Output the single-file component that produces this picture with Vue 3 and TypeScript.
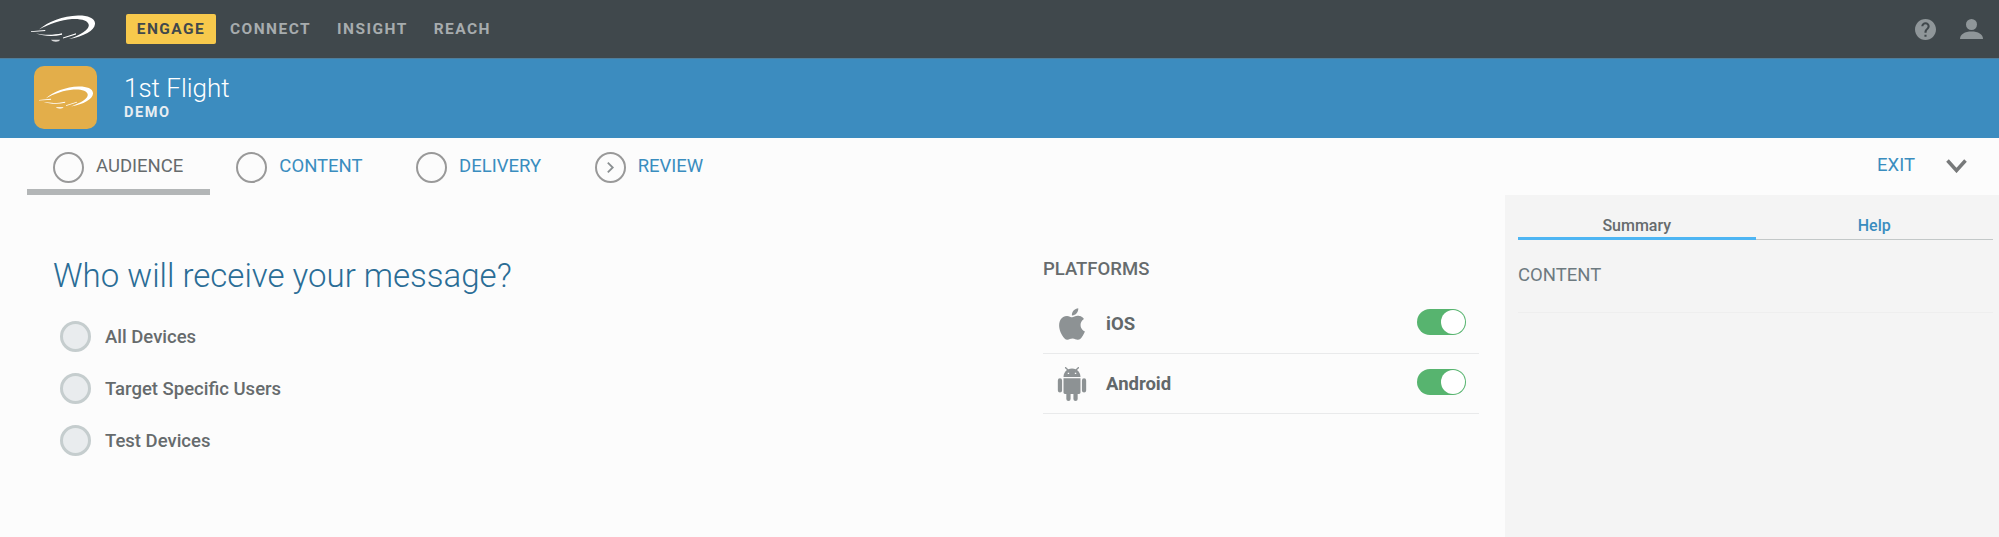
<script setup lang="ts">
interface Step { label: string; active?: boolean; arrow?: boolean }
const navItems: string[] = ['CONNECT', 'INSIGHT', 'REACH']
const steps: Step[] = [
  { label: 'AUDIENCE', active: true },
  { label: 'CONTENT' },
  { label: 'DELIVERY' },
  { label: 'REVIEW', arrow: true },
]
const audiences: string[] = ['All Devices', 'Target Specific Users', 'Test Devices']
const apple = 'M18.71,19.5C17.88,20.74 17,21.95 15.66,21.97C14.32,22 13.89,21.18 12.37,21.18C10.84,21.18 10.37,21.95 9.1,22C7.79,22.05 6.8,20.68 5.96,19.47C4.25,17 2.94,12.45 4.7,9.39C5.57,7.87 7.13,6.91 8.82,6.88C10.1,6.86 11.32,7.75 12.11,7.75C12.89,7.75 14.37,6.68 15.92,6.84C16.57,6.87 18.39,7.1 19.56,8.82C19.47,8.88 17.39,10.1 17.41,12.63C17.44,15.65 20.06,16.66 20.09,16.67C20.06,16.74 19.67,18.11 18.71,19.5M13,3.5C13.73,2.67 14.94,2.04 15.94,2C16.07,3.17 15.6,4.35 14.9,5.19C14.21,6.04 13.07,6.7 11.95,6.61C11.8,5.46 12.36,4.26 13,3.5Z'
const android = 'M15,5H14V4H15M10,5H9V4H10M15.53,2.16L16.84,0.85C17.03,0.66 17.03,0.34 16.84,0.14C16.64,-0.05 16.32,-0.05 16.13,0.14L14.65,1.62C13.85,1.23 12.95,1 12,1C11.04,1 10.14,1.23 9.34,1.63L7.85,0.14C7.66,-0.05 7.34,-0.05 7.15,0.14C6.95,0.34 6.95,0.66 7.15,0.85L8.46,2.16C6.97,3.26 6,5 6,7H18C18,5 17,3.25 15.53,2.16M20.5,8A1.5,1.5 0 0,0 19,9.5V16.5A1.5,1.5 0 0,0 20.5,18A1.5,1.5 0 0,0 22,16.5V9.5A1.5,1.5 0 0,0 20.5,8M3.5,8A1.5,1.5 0 0,0 2,9.5V16.5A1.5,1.5 0 0,0 3.5,18A1.5,1.5 0 0,0 5,16.5V9.5A1.5,1.5 0 0,0 3.5,8M6,18A1,1 0 0,0 7,19H8V22.5A1.5,1.5 0 0,0 9.5,24A1.5,1.5 0 0,0 11,22.5V19H13V22.5A1.5,1.5 0 0,0 14.5,24A1.5,1.5 0 0,0 16,22.5V19H17A1,1 0 0,0 18,18V8H6V18Z'
const platforms = [
  { name: 'iOS', path: apple, size: 38 },
  { name: 'Android', path: android, size: 34 },
]
const blimp = 'M8 14.500C17 6.500 32 .8 47 .4 57 .2 64.500 3.200 64 9 63.500 15.500 53 21.500 38 24 50 19.500 58 15 57.800 10 57.500 5.500 50 3.500 41 4 30 4.800 18 9 8 14.500Z'
const streaks = 'M0 16.300 14 15 14.500 16 0 17.100ZM5 18.500C15 20.500 23 20 31 18.300L31 19.700C22 21.700 13 21.300 5 18.500ZM32 22.500 45 18.300 45 19.400 32 23.500Z'
const gondola = 'M20 24.700 29 24.700C28.500 27.300 21.500 27.300 20 24.700Z'
</script>

<template>
  <div class="page">
    <header class="topbar">
      <svg class="logo" viewBox="0 0 64 28" fill="#fff">
        <path :d="blimp" />
        <path :d="streaks" />
        <path :d="gondola" opacity=".8" />
      </svg>
      <nav class="mainnav">
        <span class="engage">ENGAGE</span>
        <span v-for="item in navItems" :key="item" class="navitem">{{ item }}</span>
      </nav>
      <div class="usericons">
        <svg class="help" viewBox="2 2 20 20" fill="#8f9699"><path d="M12 2C6.480 2 2 6.480 2 12s4.480 10 10 10 10-4.480 10-10S17.520 2 12 2zm1 17h-2v-2h2v2zm2.070-7.750l-.9.920C13.450 12.900 13 13.500 13 15h-2v-.5c0-1.100.450-2.100 1.170-2.830l1.240-1.260c.370-.360.590-.860.590-1.410 0-1.100-.9-2-2-2s-2 .9-2 2H8c0-2.210 1.790-4 4-4s4 1.790 4 4c0 .880-.360 1.680-.930 2.250z" /></svg>
        <svg class="person" viewBox="0 0 23 20" fill="#8f9699"><circle cx="11.500" cy="5.500" r="5.500" /><path d="M0 20C0 15 5 12.500 11.500 12.500S23 15 23 20Z" /></svg>
      </div>
    </header>

    <section class="appbar">
      <div class="appicon">
        <svg class="applogo" viewBox="0 0 64 28" fill="#fff">
          <path :d="blimp" />
          <path :d="streaks" />
          <path :d="gondola" opacity=".8" />
        </svg>
      </div>
      <div class="apptext">
        <div class="appname">1st Flight</div>
        <div class="appmode">DEMO</div>
      </div>
    </section>

    <section class="stepbar">
      <div v-for="step in steps" :key="step.label" class="step" :class="{ active: step.active }">
        <span class="stepcircle">
          <svg v-if="step.arrow" viewBox="0 0 10 14" class="steparrow"><path d="M2 1.500 7.500 7 2 12.500" /></svg>
        </span>
        <span class="steplabel">{{ step.label }}</span>
      </div>
      <span class="exit">EXIT</span>
      <svg class="chevron" viewBox="0 0 21 14"><path d="M1.500 1.500 10.500 11.500 19.500 1.500" /></svg>
    </section>

    <main class="content">
      <div class="form">
        <div class="audience">
          <h1>Who will receive your message?</h1>
          <label v-for="a in audiences" :key="a" class="radio"><span class="dot"></span>{{ a }}</label>
        </div>
        <div class="platforms">
          <h2>PLATFORMS</h2>
          <div v-for="p in platforms" :key="p.name" class="platform">
            <span class="picon"><svg :width="p.size" :height="p.size" viewBox="0 0 24 24" fill="#8d9294"><path :d="p.path" /></svg></span>
            <span class="pname">{{ p.name }}</span>
            <span class="toggle"><span class="knob"></span></span>
          </div>
        </div>
      </div>
      <aside class="side">
        <div class="tabs">
          <div class="tab current">Summary</div>
          <div class="tab">Help</div>
        </div>
        <div class="sidehead">CONTENT</div>
      </aside>
    </main>
  </div>
</template>

<style>
html, body { margin: 0; background: #fcfcfc; }
</style>

<style scoped>
.page { width: 1999px; height: 537px; overflow: hidden; display: flex; flex-direction: column; background: #fcfcfc; font-family: Roboto, "Liberation Sans", sans-serif; }

.topbar { height: 58px; flex: none; display: flex; align-items: center; background: #40484c; padding-left: 31px; padding-right: 16px; box-sizing: border-box; }
.logo { width: 64px; height: 28px; flex: none; margin-top: -1px; }
.mainnav { display: flex; align-items: center; margin-left: 31px; font-size: 15.500px; font-weight: 700; letter-spacing: 1.450px; }
.engage { background: #f7c94c; color: #40484c; border-radius: 2px; height: 30px; line-height: 30px; width: 90px; text-align: center; margin-right: 14px; }
.navitem { color: #a7acae; margin-right: 26px; }
.usericons { margin-left: auto; display: flex; align-items: center; gap: 24px; }
.help { width: 21px; height: 21px; }
.person { width: 23px; height: 20px; }

.appbar { height: 80px; flex: none; display: flex; align-items: center; background: #3c8cbf; border-top: 1px solid #4f7e9c; box-sizing: border-box; padding-left: 34px; padding-bottom: 2px; }
.appicon { width: 63px; height: 63px; background: #e3ae4a; border-radius: 10px; display: flex; align-items: center; justify-content: center; }
.applogo { width: 54px; height: 24px; }
.apptext { margin-left: 27px; color: #fff; }
.appname { font-size: 26px; font-weight: 300; line-height: 30px; }
.appmode { font-size: 14.500px; font-weight: 700; letter-spacing: 1.600px; line-height: 19px; color: #e8eef2; }

.stepbar { height: 57px; flex: none; display: flex; align-items: flex-start; padding-left: 27px; padding-right: 32px; box-sizing: border-box; }
.step { display: flex; align-items: center; gap: 12px; height: 51px; padding: 7px 27.500px 0 26px; box-sizing: border-box; color: #3a8dbf; font-size: 18.500px; }
.step.active { color: #666b6d; height: 57px; border-bottom: 6px solid #b3b6b7; padding-right: 27px; }
.stepcircle { width: 31px; height: 31px; box-sizing: border-box; border: 2px solid #999; border-radius: 50%; display: flex; align-items: center; justify-content: center; flex: none; }
.steparrow { width: 9px; height: 13px; fill: none; stroke: #8a8f91; stroke-width: 2; }
.steplabel { line-height: 20px; margin-top: -2px; }
.exit { margin-left: auto; margin-top: 17px; color: #3a8dbf; font-size: 18.500px; line-height: 20px; }
.chevron { width: 21px; height: 14px; margin-left: 31px; margin-top: 21px; fill: none; stroke: #77797a; stroke-width: 3.500; }

.content { flex: 1; display: flex; min-height: 0; }
.form { flex: 1; display: flex; }
.audience { width: 1043px; padding-left: 53px; box-sizing: border-box; }
h1 { margin: 61px 0 25px; font-size: 33px; font-weight: 300; line-height: 40px; color: #2a6d96; }
.radio { display: flex; align-items: center; gap: 14px; height: 31px; margin: 0 0 21px 7px; font-size: 18.500px; font-weight: 500; color: #666b6d; }
.dot { width: 31px; height: 31px; box-sizing: border-box; border: 3px solid #c5cdce; background: #e9ecee; border-radius: 50%; flex: none; }
.platforms { width: 436px; }
h2 { margin: 64px 0 15px; font-size: 18.500px; font-weight: 500; line-height: 20px; color: #666b6d; }
.platform { height: 60px; display: flex; align-items: center; border-bottom: 1px solid #e9eaeb; box-sizing: border-box; padding-right: 13px; }
.picon { width: 63px; display: flex; justify-content: center; padding-right: 6px; box-sizing: border-box; }
.pname { font-size: 18.500px; font-weight: 700; color: #62686a; }
.toggle { margin-left: auto; margin-top: -3px; width: 49px; height: 26px; background: #57b46f; border-radius: 13px; display: flex; align-items: center; justify-content: flex-end; padding-right: 1px; box-sizing: border-box; }
.knob { width: 24px; height: 24px; border-radius: 50%; background: #fff; }

.side { width: 494px; flex: none; background: #f4f4f4; padding: 16px 6px 0 13px; box-sizing: border-box; }
.tabs { display: flex; }
.tab { flex: 1; height: 29px; box-sizing: border-box; border-bottom: 1px solid #c3c8c8; text-align: center; font-size: 16px; font-weight: 500; line-height: 29px; color: #3a8dbf; }
.tab.current { color: #666b6d; border-bottom: 3px solid #4db5f3; }
.sidehead { height: 73px; box-sizing: border-box; border-bottom: 1px solid #eeeeee; font-size: 18.500px; color: #6d7a80; padding-top: 25px; line-height: 20px; }
</style>
